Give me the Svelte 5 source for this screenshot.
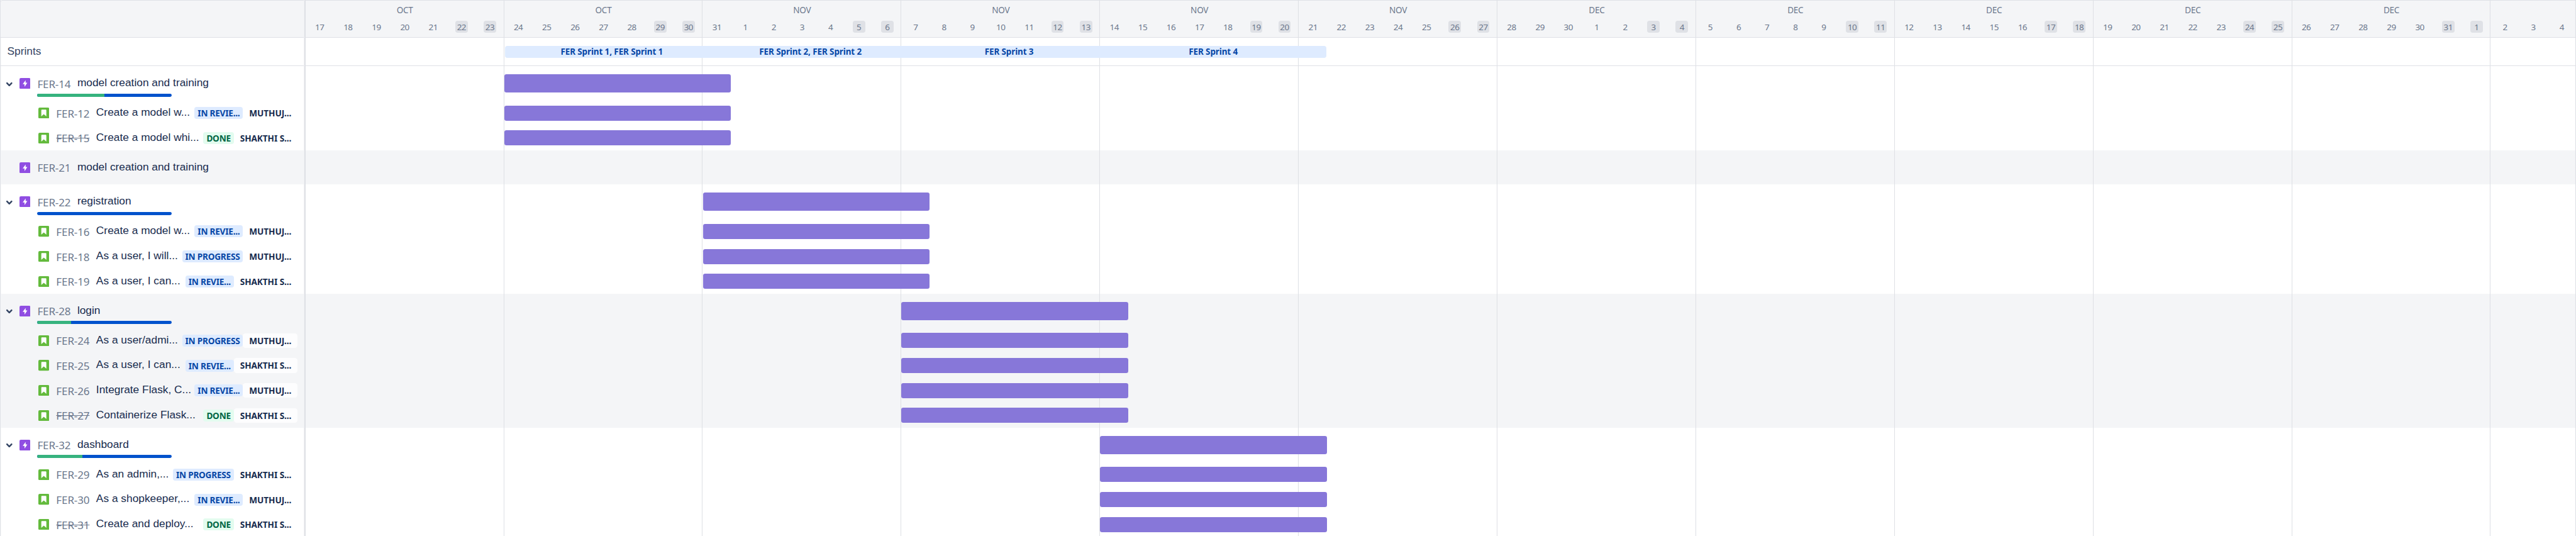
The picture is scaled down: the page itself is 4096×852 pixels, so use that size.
<script>
  const days = [];
  for (let i = 0; i < 80; i++) days.push(new Date(Date.UTC(2022, 9, 17 + i)).getUTCDate());
  const months = ['OCT', 'OCT', 'NOV', 'NOV', 'NOV', 'NOV', 'DEC', 'DEC', 'DEC', 'DEC', 'DEC', ''];
  const weeks = months.map((month, w) => ({ month, days: days.slice(w * 7, w * 7 + 7) }));

  const sprints = ['FER Sprint 1, FER Sprint 1', 'FER Sprint 2, FER Sprint 2', 'FER Sprint 3', 'FER Sprint 4'];

  const R = 'IN REVIE...';
  const P = 'IN PROGRESS';
  const D = 'DONE';
  const M = 'MUTHUJ...';
  const S = 'SHAKTHI S...';
  const epics = [
    { key: 'FER-14', title: 'model creation and training', week: 1, done: 50, items: [
      ['FER-12', 'Create a model w...', R, M],
      ['FER-15', 'Create a model whi...', D, S]
    ] },
    { key: 'FER-21', title: 'model creation and training', items: [] },
    { key: 'FER-22', title: 'registration', week: 2, done: 0, items: [
      ['FER-16', 'Create a model w...', R, M],
      ['FER-18', 'As a user, I will...', P, M],
      ['FER-19', 'As a user, I can...', R, S]
    ] },
    { key: 'FER-28', title: 'login', week: 3, done: 25, items: [
      ['FER-24', 'As a user/admi...', P, M],
      ['FER-25', 'As a user, I can...', R, S],
      ['FER-26', 'Integrate Flask, C...', R, M],
      ['FER-27', 'Containerize Flask...', D, S]
    ] },
    { key: 'FER-32', title: 'dashboard', week: 4, done: 33.4, items: [
      ['FER-29', 'As an admin,...', P, S],
      ['FER-30', 'As a shopkeeper,...', R, M],
      ['FER-31', 'Create and deploy...', D, S]
    ] }
  ];
  const barLeft = (week) => 382.45 * week + 0.2;
</script>

<div class="roadmap">
  <aside class="side">
    <div class="side-head"></div>
    <div class="side-sprints">Sprints</div>
    {#each epics as e, i}
      <section class:alt={i % 2 === 1}>
        <div class="epic">
          <span class="toggle">
            {#if e.items.length}
              <svg width="14" height="10" viewBox="0 0 14 10"><path d="M2.6 2.6 7 7l4.4-4.4" fill="none" stroke="#344563" stroke-width="3" stroke-linecap="round" stroke-linejoin="round" /></svg>
            {/if}
          </span>
          <svg class="icon" viewBox="0 0 16 16"><rect width="16" height="16" rx="2" fill="#904ee2" /><path d="M9 3.2 4.7 8.9h2.7v3.9L11.5 7H9z" fill="#fff" /></svg>
          <span class="key">{e.key}</span>
          <span class="title">{e.title}</span>
          {#if e.items.length}
            <div class="progress"><i style="width:{e.done}%"></i></div>
          {/if}
        </div>
        {#each e.items as [key, title, status, who]}
          <div class="item">
            <svg class="icon" viewBox="0 0 16 16"><rect width="16" height="16" rx="2" fill="#63ba3c" /><path d="M5.4 3h5.2c.7 0 1.1.4 1.1 1.1V13L8 9.7 4.3 13V4.1c0-.7.4-1.1 1.1-1.1z" fill="#fff" /></svg>
            <span class="key" class:struck={status === D}>{key}</span>
            <span class="title">{title}</span>
            <span class="status" class:green={status === D}>{status}</span>
            <span class="who">{who}</span>
          </div>
        {/each}
      </section>
    {/each}
  </aside>

  <main class="time">
    <div class="time-head">
      {#each weeks as w}
        <div class="week" style="width:{w.days.length * 54.636}px">
          <div class="month">{w.month}</div>
          <div class="days">
            {#each w.days as d, j}
              <div class="day"><span class:off={j > 4}>{d}</span></div>
            {/each}
          </div>
        </div>
      {/each}
    </div>
    <div class="time-sprints">
      <div class="band">
        {#each sprints as s, i}
          <div class="sprint" class:last={i === 3}><span>{s}</span></div>
        {/each}
      </div>
    </div>
    {#each epics as e, i}
      <section class:alt={i % 2 === 1}>
        <div class="lane tall">
          {#if e.week}<div class="bar" style="margin-left:{barLeft(e.week)}px"></div>{/if}
        </div>
        {#each e.items as _}
          <div class="lane"><div class="bar" style="margin-left:{barLeft(e.week)}px"></div></div>
        {/each}
      </section>
    {/each}
    <div class="grid">
      {#each weeks as w}<i style="width:{w.days.length * 54.636}px"></i>{/each}
    </div>
  </main>
</div>

<style>
  :global(body) { margin: 0; background: #fff; overflow: hidden; }
  .roadmap {
    zoom: 0.82597;
    display: flex;
    width: 4959px;
    height: 1032px;
    overflow: hidden;
    background: #fff;
    font-family: "Noto Sans", "Open Sans", sans-serif;
    color: #172b4d;
    white-space: nowrap;
  }
  .roadmap * { box-sizing: border-box; }
  .side {
    width: 588px;
    flex: none;
    box-shadow: inset 1.5px 0 #dfe1e6, inset -3px 0 #dfe1e6;
    position: relative;
    z-index: 2;
  }
  .side-head, .time-head {
    height: 73px;
    background: #f4f5f7;
    box-shadow: inset 0 1.3px #dfe1e6, inset 0 -1.3px #dfe1e6;
  }
  .side-sprints, .time-sprints { height: 54px; box-shadow: inset 0 -1.3px #dfe1e6; }
  .side-head, .side-sprints, .side section { margin: 0 3px 0 1.5px; }
  .side-head { border-top-left-radius: 4px; }
  .side-sprints { padding-left: 12.5px; font: 21px/52px "Liberation Sans", sans-serif; color: #344563; }
  .alt { background: #f4f5f7; }
  .epic {
    height: 66px;
    display: flex;
    flex-wrap: wrap;
    align-content: flex-start;
    padding-top: 17px;
  }
  .toggle { width: 36px; height: 32px; display: flex; align-items: center; padding: 4px 0 0 9.5px; }
  .icon { width: 21px; height: 21px; flex: none; }
  .epic .icon { margin-top: 6px; }
  .key { font-size: 20.6px; line-height: 32px; letter-spacing: -.15px; color: #6b778c; width: 76px; flex: none; }
  .title { font: 21px/31px "Liberation Sans", sans-serif; margin-left: .9px; }
  .epic .key { margin-left: 13.4px; padding-top: 2px; height: 34px; }
  .progress {
    width: 258px;
    height: 6px;
    margin: 2px 180px 0 70.5px;
    border-radius: 3px;
    overflow: hidden;
    background: #0052cc;
    display: flex;
  }
  .progress i { background: #36b37e; }
  .item { height: 48px; display: flex; align-items: center; padding: 1.2px 12px 0 72px; }
  .item .key { margin-left: 13.7px; padding-top: 3px; }
  .item .title { flex: 1; padding-bottom: 2px; }
  .struck { text-decoration: line-through; }
  .status {
    height: 23px;
    padding: 0 6px;
    border-radius: 4.5px;
    background: #deebff;
    color: #0747a6;
    font-size: 16.5px;
    font-weight: 700;
    line-height: 23px;
    letter-spacing: -.28px;
  }
  .status.green { background: #e3fcef; color: #006644; }
  .who {
    height: 28px;
    padding: 0 12px;
    border-radius: 5px;
    background: rgba(255, 255, 255, .8);
    font-size: 16.5px;
    font-weight: 700;
    line-height: 30px;
    letter-spacing: -.08px;
  }
  .time { flex: 1; position: relative; min-width: 0; }
  .time-head { display: flex; }
  .week { flex: none; padding-top: 9px; }
  .month { height: 24px; text-align: center; font-size: 16.4px; line-height: 24px; letter-spacing: -.3px; color: #6b778c; }
  .days { display: flex; margin-top: 7px; }
  .day { width: 54.636px; flex: none; display: flex; justify-content: center; }
  .day span {
    width: 24px;
    height: 23px;
    border-radius: 4.5px;
    text-align: center;
    font-size: 16.3px;
    line-height: 25.5px;
    letter-spacing: -.6px;
    color: #6b778c;
  }
  .day .off { background: #dfe1e6; }
  .time-sprints { padding: 15px 0 0 384.3px; }
  .band { position: relative; z-index: 1; width: 1581px; height: 23px; display: flex; background: #deebff; border-radius: 4.5px; }
  .sprint { width: 382.45px; flex: none; }
  .sprint span {
    display: block;
    width: 411px;
    text-align: center;
    font-size: 16.3px;
    font-weight: 700;
    line-height: 24px;
    letter-spacing: -.12px;
    color: #0747a6;
  }
  .sprint.last span { width: 432px; }
  .lane { height: 48px; padding-top: 10px; }
  .lane.tall { height: 66px; padding-top: 16px; }
  .bar { position: relative; z-index: 1; width: 436.8px; height: 29px; border-radius: 4px; background: #8777d9; }
  .tall .bar { height: 35px; }
  .grid { position: absolute; inset: 0; display: flex; pointer-events: none; }
  .grid i { flex: none; box-shadow: inset -1.3px 0 #dfe1e6; }
</style>
